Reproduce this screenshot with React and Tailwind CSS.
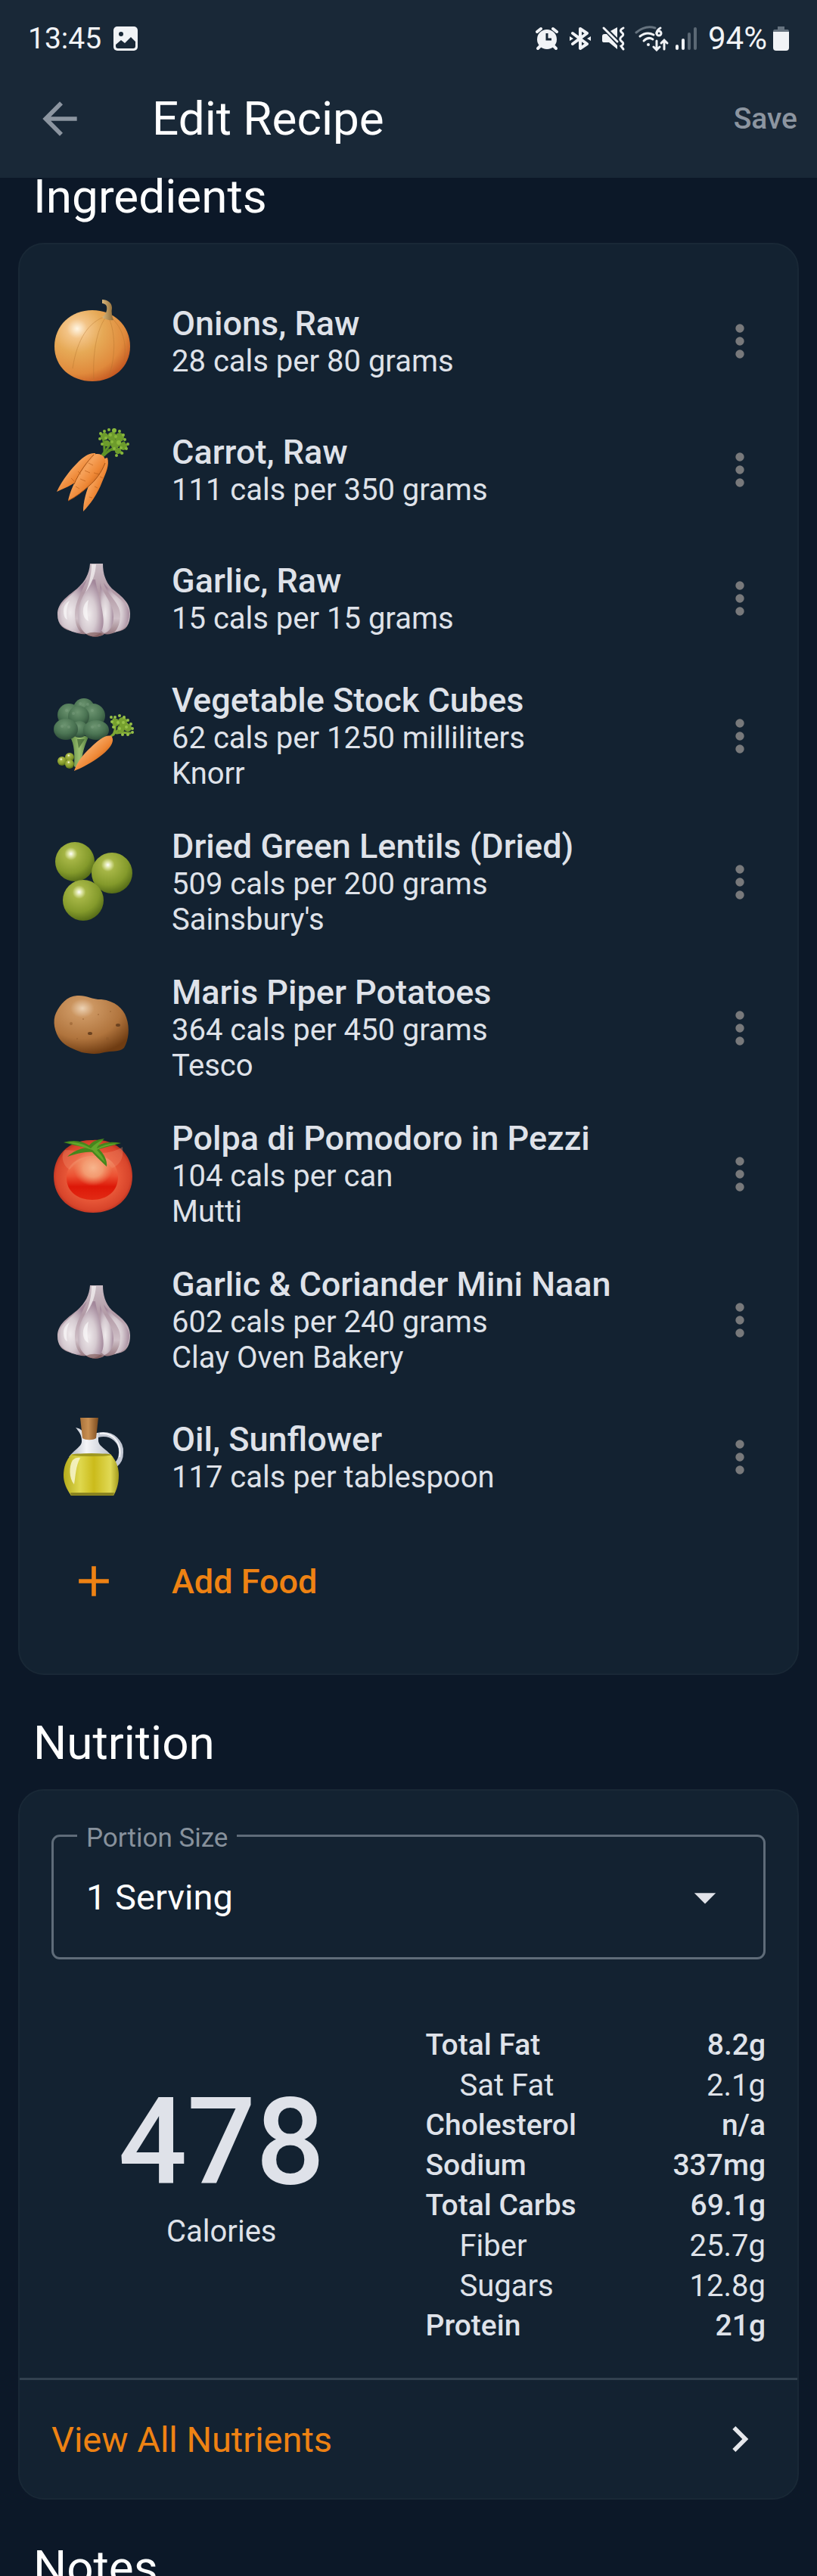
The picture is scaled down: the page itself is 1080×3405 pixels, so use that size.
import React from 'react';

const ingredients = [
  { name: 'Onions, Raw', detail: '28 cals per 80 grams', icon: OnionIcon },
  { name: 'Carrot, Raw', detail: '111 cals per 350 grams', icon: CarrotIcon },
  { name: 'Garlic, Raw', detail: '15 cals per 15 grams', icon: GarlicIcon },
  { name: 'Vegetable Stock Cubes', detail: '62 cals per 1250 milliliters', brand: 'Knorr', icon: VegetablesIcon },
  { name: 'Dried Green Lentils (Dried)', detail: '509 cals per 200 grams', brand: "Sainsbury's", icon: LentilsIcon },
  { name: 'Maris Piper Potatoes', detail: '364 cals per 450 grams', brand: 'Tesco', icon: PotatoIcon },
  { name: 'Polpa di Pomodoro in Pezzi', detail: '104 cals per can', brand: 'Mutti', icon: TomatoIcon },
  { name: 'Garlic & Coriander Mini Naan', detail: '602 cals per 240 grams', brand: 'Clay Oven Bakery', icon: GarlicIcon },
  { name: 'Oil, Sunflower', detail: '117 cals per tablespoon', icon: OilIcon },
];

const nutrients = [
  { label: 'Total Fat', value: '8.2g' },
  { label: 'Sat Fat', value: '2.1g', sub: true },
  { label: 'Cholesterol', value: 'n/a' },
  { label: 'Sodium', value: '337mg' },
  { label: 'Total Carbs', value: '69.1g' },
  { label: 'Fiber', value: '25.7g', sub: true },
  { label: 'Sugars', value: '12.8g', sub: true },
  { label: 'Protein', value: '21g' },
];

// Shared gradients, referenced by id from the food icons
function IconGradients() {
  return (
    <svg width="0" height="0" className="absolute" aria-hidden="true">
      <defs>
        <radialGradient id="onionBody" cx="0.3" cy="0.26" r="0.85">
          <stop offset="0" stopColor="#fff6e4" />
          <stop offset="0.16" stopColor="#f3c487" />
          <stop offset="0.4" stopColor="#e6a956" />
          <stop offset="0.75" stopColor="#e08a3c" />
          <stop offset="1" stopColor="#c04f1c" />
        </radialGradient>
        <linearGradient id="onionStem" x1="0" y1="0" x2="1" y2="0">
          <stop offset="0" stopColor="#d9b77c" />
          <stop offset="1" stopColor="#8f6a35" />
        </linearGradient>
        <linearGradient id="carrotBody" x1="0.2" y1="0.1" x2="0.8" y2="0.7">
          <stop offset="0" stopColor="#d9742a" />
          <stop offset="0.4" stopColor="#f6a25a" />
          <stop offset="0.7" stopColor="#ee8735" />
          <stop offset="1" stopColor="#c05e16" />
        </linearGradient>
        <linearGradient id="garlicBody" x1="0" y1="0" x2="0" y2="1">
          <stop offset="0" stopColor="#c9bcc4" />
          <stop offset="0.4" stopColor="#b29aa6" />
          <stop offset="0.75" stopColor="#cfc0c7" />
          <stop offset="1" stopColor="#8d6d75" />
        </linearGradient>
        <radialGradient id="garlicClove" cx="0.42" cy="0.62" r="0.6">
          <stop offset="0" stopColor="#efeaec" />
          <stop offset="0.5" stopColor="#d6cbd1" />
          <stop offset="1" stopColor="#a3889b" />
        </radialGradient>
        <radialGradient id="broccoliHead" cx="0.45" cy="0.3" r="0.75">
          <stop offset="0" stopColor="#6c9470" />
          <stop offset="0.55" stopColor="#4b7453" />
          <stop offset="1" stopColor="#294734" />
        </radialGradient>
        <linearGradient id="broccoliStalk" x1="0" y1="0" x2="1" y2="0">
          <stop offset="0" stopColor="#5f8a44" />
          <stop offset="0.5" stopColor="#9cc070" />
          <stop offset="1" stopColor="#4f7a3c" />
        </linearGradient>
        <radialGradient id="pea" cx="0.4" cy="0.3" r="0.75">
          <stop offset="0" stopColor="#ffffff" />
          <stop offset="0.1" stopColor="#dbe3a0" />
          <stop offset="0.22" stopColor="#a5b545" />
          <stop offset="0.65" stopColor="#849a2b" />
          <stop offset="1" stopColor="#4d6414" />
        </radialGradient>
        <radialGradient id="potatoBody" cx="0.38" cy="0.22" r="0.8">
          <stop offset="0" stopColor="#ecd2b4" />
          <stop offset="0.2" stopColor="#cb9560" />
          <stop offset="0.65" stopColor="#b0743d" />
          <stop offset="1" stopColor="#6f3c12" />
        </radialGradient>
        <radialGradient id="tomatoBody" cx="0.5" cy="0.5" r="0.55">
          <stop offset="0" stopColor="#f0613a" />
          <stop offset="0.55" stopColor="#ea5a3a" />
          <stop offset="0.85" stopColor="#d8452b" />
          <stop offset="1" stopColor="#a3261a" />
        </radialGradient>
        <linearGradient id="tomatoGlow" x1="0" y1="0" x2="0" y2="1">
          <stop offset="0" stopColor="#f09066" />
          <stop offset="0.45" stopColor="#ec5233" />
          <stop offset="0.7" stopColor="#dd1808" />
          <stop offset="1" stopColor="#e22a14" />
        </linearGradient>
        <radialGradient id="tomatoShine" cx="0.5" cy="0.45" r="0.5">
          <stop offset="0" stopColor="#f7b48c" />
          <stop offset="0.5" stopColor="#f39a70" />
          <stop offset="1" stopColor="#f08a60" stopOpacity="0" />
        </radialGradient>
        <linearGradient id="oilBody" x1="0" y1="0" x2="1" y2="0">
          <stop offset="0" stopColor="#b5ac1c" />
          <stop offset="0.3" stopColor="#dfd84e" />
          <stop offset="0.55" stopColor="#cbbb1b" />
          <stop offset="0.85" stopColor="#e0d955" />
          <stop offset="1" stopColor="#a39b1c" />
        </linearGradient>
        <linearGradient id="glass" x1="0" y1="0" x2="1" y2="0">
          <stop offset="0" stopColor="#aeb4c0" />
          <stop offset="0.4" stopColor="#f4f5f8" />
          <stop offset="1" stopColor="#b9bfca" />
        </linearGradient>
        <linearGradient id="cork" x1="0" y1="0" x2="1" y2="0">
          <stop offset="0" stopColor="#a8713a" />
          <stop offset="0.45" stopColor="#c99053" />
          <stop offset="1" stopColor="#7c4b1f" />
        </linearGradient>
      </defs>
    </svg>
  );
}

function FoodSvg({ children }) {
  return (
    <svg viewBox="2 0 112 112" className="size-28 shrink-0" aria-hidden="true">
      {children}
    </svg>
  );
}

function OnionIcon() {
  return (
    <FoodSvg>
      <path d="M56 15C84 15 106 35 106 63C106 90 84 109 56 109C28 109 6 90 6 63C6 35 28 15 56 15Z" fill="url(#onionBody)" />
      <g fill="none" stroke="#b3722c" strokeWidth="1" opacity="0.4">
        <path d="M74 23C52 30 36 52 30 92" />
        <path d="M75 23C64 36 56 66 58 106" />
        <path d="M77 23C86 42 88 72 78 103" />
        <path d="M79 23C97 38 102 60 98 82" />
      </g>
      <path d="M69 1C76 1 82 5 82 12C81 18 82 23 84 28C79 29 72 27 69 24C74 21 76 15 75 10C74 7 71 6 69 6Z" fill="url(#onionStem)" />
    </FoodSvg>
  );
}

function CarrotIcon() {
  return (
    <FoodSvg>
      <g fill="none" stroke="#5f9327" strokeWidth="3" strokeLinecap="round">
        <path d="M68 38C74 30 80 24 84 10" />
        <path d="M70 38C78 30 88 24 98 20" />
        <path d="M72 36C72 24 72 16 68 10" />
        <path d="M78 30C88 28 94 32 96 34" />
      </g>
      <g fill="#6d9c2c">
        <circle cx="72" cy="12" r="5" />
        <circle cx="82" cy="12" r="6" />
        <circle cx="92" cy="13" r="6" />
        <circle cx="86" cy="22" r="6" />
        <circle cx="97" cy="25" r="5" />
        <circle cx="75" cy="21" r="4" />
        <circle cx="90" cy="31" r="4" />
      </g>
      <g fill="#88b83c">
        <circle cx="67" cy="8" r="2" />
        <circle cx="72" cy="5" r="2" />
        <circle cx="78" cy="3" r="2" />
        <circle cx="85" cy="4" r="3" />
        <circle cx="92" cy="5" r="2" />
        <circle cx="97" cy="10" r="2" />
        <circle cx="99" cy="16" r="2" />
        <circle cx="103" cy="22" r="2" />
        <circle cx="101" cy="28" r="2" />
        <circle cx="95" cy="34" r="2" />
        <circle cx="88" cy="37" r="2" />
        <circle cx="66" cy="15" r="2" />
        <circle cx="69" cy="22" r="2" />
        <circle cx="74" cy="14" r="2" />
        <circle cx="80" cy="10" r="2" />
        <circle cx="87" cy="12" r="2" />
        <circle cx="82" cy="19" r="2" />
        <circle cx="91" cy="20" r="3" />
        <circle cx="85" cy="28" r="2" />
        <circle cx="94" cy="27" r="2" />
      </g>
      <path d="M60 34C52 33 44 39 38 45C28 55 17 68 9 85C22 79 36 74 48 60C56 50 62 42 60 34Z" fill="url(#carrotBody)" />
      <path d="M76 40C79 50 74 60 69 72C63 88 53 102 44 111C44 98 48 84 54 70C59 58 66 42 76 40Z" fill="url(#carrotBody)" />
      <path d="M61 35C70 34 76 42 72 49C68 60 60 70 52 77C43 85 34 92 24 97C26 86 33 70 41 58C47 48 53 37 61 35Z" fill="url(#carrotBody)" />
      <path d="M73 47C68 60 60 70 52 77C43 85 34 92 24 97" fill="none" stroke="#a34f12" strokeWidth="1" />
      <path d="M58 36C50 44 38 60 32 75" fill="none" stroke="#a34f12" strokeWidth="1" />
      <path d="M51 47l6 3M46 57l7 3M40 68l7 3M34 78l5 3M58 60l7 2M37 58l4 4M28 67l4 4M66 65l4 2M59 78l4 2M52 92l4 1" stroke="#b65b16" strokeWidth="1" opacity="0.6" />
    </FoodSvg>
  );
}

function GarlicIcon() {
  return (
    <FoodSvg>
      <path d="M53 10H70C70 22 73 34 82 43C96 54 106 62 106 76C106 90 101 99 88 100C82 103 76 104 72 103C66 108 54 108 48 103C42 104 36 102 32 100C18 98 10 91 10 77C10 62 22 54 36 43C47 33 52 23 53 10Z" fill="url(#garlicBody)" />
      <path d="M49 31C43 46 33 60 33 77C33 88 36 96 41 101C34 103 28 99 24 97C14 93 11 86 11 77C11 62 30 52 49 31Z" fill="url(#garlicClove)" />
      <path d="M71 35C74 50 92 60 93 77C93 88 90 96 85 101C99 98 105 89 105 76C105 61 84 54 71 35Z" fill="url(#garlicClove)" />
      <path d="M66 33C66 46 84 60 84 80C84 92 79 100 72 102C66 100 64 90 66 78C69 62 66 46 66 33Z" fill="url(#garlicClove)" />
      <path d="M56 31C48 46 37 60 37 78C37 92 44 105 58 106C70 103 72 92 70 78C68 60 62 46 60 31Z" fill="url(#garlicClove)" />
      <path d="M55 11H61C60 24 56 36 47 48C52 36 55 24 55 11Z" fill="#f1edef" opacity="0.8" />
      <path d="M18 72C18 66 22 61 26 59C22 66 21 76 23 84C19 82 18 78 18 72Z" fill="#fff" opacity="0.6" />
      <path d="M44 70C45 64 48 60 51 58C49 66 49 78 51 86C46 84 43 78 44 70Z" fill="#fff" opacity="0.6" />
      <path d="M48 103C54 100 64 100 70 103C66 108 54 108 48 103Z" fill="#7c5450" opacity="0.6" />
    </FoodSvg>
  );
}

function VegetablesIcon() {
  return (
    <FoodSvg>
      <path d="M27 58C32 66 33 80 32 96C36 99 40 96 42 92C42 80 46 68 51 57L38 54Z" fill="url(#broccoliStalk)" />
      <path d="M36 60L38 72L46 60Z" fill="#3d6232" opacity="0.7" />
      <g fill="url(#broccoliHead)">
        <circle cx="45" cy="20" r="14" />
        <circle cx="25" cy="28" r="15" />
        <circle cx="57" cy="29" r="16" />
        <circle cx="38" cy="30" r="14" />
        <circle cx="39" cy="47" r="11" />
        <ellipse cx="21" cy="47" rx="16" ry="14" />
        <ellipse cx="61" cy="48" rx="17" ry="13" />
      </g>
      <g fill="#86a889" opacity="0.35">
        <circle cx="40" cy="13" r="2" />
        <circle cx="50" cy="14" r="2" />
        <circle cx="22" cy="22" r="2" />
        <circle cx="31" cy="26" r="2" />
        <circle cx="56" cy="22" r="2" />
        <circle cx="16" cy="43" r="2" />
        <circle cx="25" cy="44" r="2" />
        <circle cx="56" cy="44" r="2" />
        <circle cx="65" cy="42" r="2" />
      </g>
      <g fill="none" stroke="#7da633" strokeWidth="3" strokeLinecap="round">
        <path d="M80 57C88 50 94 44 102 40" />
        <path d="M84 54C88 46 86 40 84 34" />
        <path d="M88 52C96 50 102 52 106 52" />
      </g>
      <g fill="#76a02f">
        <circle cx="87" cy="38" r="5" />
        <circle cx="96" cy="37" r="6" />
        <circle cx="103" cy="45" r="5" />
        <circle cx="94" cy="46" r="5" />
      </g>
      <g fill="#97c148">
        <circle cx="81" cy="31" r="2" />
        <circle cx="86" cy="31" r="2" />
        <circle cx="92" cy="29" r="2" />
        <circle cx="98" cy="31" r="2" />
        <circle cx="103" cy="35" r="2" />
        <circle cx="107" cy="40" r="2" />
        <circle cx="109" cy="46" r="2" />
        <circle cx="109" cy="51" r="2" />
        <circle cx="103" cy="54" r="2" />
        <circle cx="96" cy="54" r="2" />
        <circle cx="82" cy="37" r="2" />
        <circle cx="84" cy="44" r="2" />
        <circle cx="90" cy="38" r="2" />
        <circle cx="97" cy="38" r="2" />
        <circle cx="101" cy="44" r="2" />
        <circle cx="92" cy="46" r="2" />
      </g>
      <path d="M82 57C86 64 78 74 66 83C54 92 42 98 32 102C36 90 44 80 54 71C64 61 76 52 82 57Z" fill="url(#carrotBody)" />
      <circle cx="16" cy="89" r="6" fill="url(#pea)" />
      <circle cx="26" cy="84" r="6" fill="url(#pea)" />
      <circle cx="26" cy="93" r="6" fill="url(#pea)" />
    </FoodSvg>
  );
}

function LentilsIcon() {
  return (
    <FoodSvg>
      <circle cx="33" cy="29" r="26" fill="url(#pea)" />
      <circle cx="82" cy="44" r="27" fill="url(#pea)" />
      <circle cx="44" cy="80" r="27" fill="url(#pea)" />
    </FoodSvg>
  );
}

function PotatoIcon() {
  return (
    <FoodSvg>
      <path d="M36 13C48 12 54 18 68 18C86 20 97 30 101 42C106 56 104 72 98 82C92 88 80 86 72 88C62 91 52 90 42 88C32 84 20 80 14 72C6 62 3 46 8 36C14 24 22 14 36 13Z" fill="url(#potatoBody)" />
      <g fill="#6b4220">
        <ellipse cx="53" cy="63" rx="3" ry="2" />
        <ellipse cx="90" cy="52" rx="3" ry="2" />
      </g>
      <g fill="#8f5a2b" opacity="0.5">
        <circle cx="28" cy="50" r="2" />
        <circle cx="64" cy="38" r="1" />
        <circle cx="44" cy="44" r="1" />
        <circle cx="76" cy="70" r="2" />
        <circle cx="36" cy="70" r="1" />
        <circle cx="80" cy="34" r="1" />
      </g>
    </FoodSvg>
  );
}

function TomatoIcon() {
  return (
    <FoodSvg>
      <path d="M57 11C88 9 109 30 109 59C109 88 86 107 57 107C28 107 5 88 5 59C5 30 26 10 57 11Z" fill="url(#tomatoBody)" />
      <path d="M56 32C76 30 90 42 90 60C90 78 76 90 56 90C37 90 22 79 22 61C22 44 36 33 56 32Z" fill="url(#tomatoGlow)" />
      <ellipse cx="57" cy="50" rx="26" ry="24" fill="url(#tomatoShine)" />
      <path d="M54 26C66 30 84 28 96 20C98 36 92 44 82 48C74 38 64 34 56 34C46 34 34 40 26 50C16 44 14 30 20 24Z" fill="#f08f6c" opacity="0.35" />
      <path d="M18 14C32 10 42 12 52 18C56 12 64 10 72 9C68 13 65 16 64 18C74 13 84 13 94 15C84 18 74 20 65 23C72 30 76 38 75 46C69 40 62 34 56 27C46 26 34 29 23 33C30 26 40 22 48 21C38 19 28 17 18 14Z" fill="#45861c" />
      <path d="M24 14C36 13 46 17 54 22C58 17 64 13 70 11C65 17 62 20 62 22C72 17 80 15 88 16C78 18 70 20 62 24C67 29 71 35 73 41C67 35 61 29 56 24Z" fill="#64a52c" />
    </FoodSvg>
  );
}

function OilIcon() {
  return (
    <FoodSvg>
      <path d="M63 27C84 22 95 38 94 50C94 58 91 63 87 66" fill="none" stroke="#c3c8d3" strokeWidth="6" />
      <path d="M66 25C86 23 95 40 92 56" fill="none" stroke="#f5f6f9" strokeWidth="2" />
      <path d="M34 17C39 18 43 20 43 24H64V34C64 42 76 46 83 56H25C32 46 43 42 42 34C42 26 38 22 34 17Z" fill="url(#glass)" />
      <path d="M29 52H80C89 62 91 72 91 80C91 91 88 100 84 107H28C22 98 18 90 18 80C18 70 21 60 29 52Z" fill="url(#oilBody)" />
      <ellipse cx="55" cy="53" rx="26" ry="2" fill="#9f9822" />
      <path d="M30 60C33 57 37 56 40 57C34 68 34 80 32 92C25 84 25 68 30 60Z" fill="#f8f6cf" opacity="0.85" />
      <path d="M27 103H85L84 107H28Z" fill="#8b8420" />
      <path d="M40 4H64L61 31C57 34 47 34 43 31Z" fill="url(#cork)" />
    </FoodSvg>
  );
}

function StatusIcons() {
  return (
    <svg viewBox="0 0 216 34" className="h-[34px] w-[216px]" aria-hidden="true">
      {/* alarm */}
      <g transform="translate(0 1)">
        <circle cx="15" cy="17" r="13" fill="#f1f3f6" />
        <path d="M2 7L7 3M28 7L23 3" stroke="#f1f3f6" strokeWidth="4" strokeLinecap="round" />
        <path d="M6 26L3 29M24 26L27 29" stroke="#f1f3f6" strokeWidth="4" strokeLinecap="round" />
        <path d="M15 9V17H21" fill="none" stroke="#192837" strokeWidth="3" />
      </g>
      {/* bluetooth */}
      <path d="M49 10L68 24L59 30V4L68 10L49 24" fill="none" stroke="#f1f3f6" strokeWidth="4" strokeLinejoin="round" strokeLinecap="round" />
      <path d="M45 14L50 17L45 20ZM73 14L68 17L73 20Z" fill="#f1f3f6" />
      {/* sound off, vibrate */}
      <path d="M88 14Q88 11 91 11H94L108 26V31L97 22H91Q88 22 88 20Z" fill="#f1f3f6" />
      <path d="M99 7L108 2V16Z" fill="#f1f3f6" />
      <path d="M90 3L108 21" stroke="#f1f3f6" strokeWidth="3" strokeLinecap="round" />
      <path d="M116 3Q110 6 114 9Q118 12 113 15Q110 18 114 21Q118 24 113 27L116 31" fill="none" stroke="#f1f3f6" strokeWidth="3" strokeLinecap="round" />
      {/* wifi 6 with data arrows */}
      <path d="M133 9Q145 -1 158 3" fill="none" stroke="#66737f" strokeWidth="3" strokeLinecap="round" />
      <g fill="none" stroke="#f1f3f6" strokeWidth="3" strokeLinecap="round">
        <path d="M138 14Q147 7 156 12" />
        <path d="M143 20Q149 14 155 18" />
        <path d="M165 3Q160 6 160 10" />
        <circle cx="163" cy="10" r="3" />
        <path d="M160 20V31M156 28L160 32L164 28" />
        <path d="M170 31V20M166 23L170 19L174 23" />
      </g>
      <circle cx="149" cy="25" r="2" fill="#f1f3f6" />
      {/* signal strength */}
      <g strokeWidth="4" strokeLinecap="round">
        <path d="M187 27V30M195 19V30" stroke="#f1f3f6" />
        <path d="M203 11V30M211 4V30" stroke="#5b6874" />
      </g>
    </svg>
  );
}

function StatusBar() {
  return (
    <div className="flex h-[77px] items-center justify-between px-[37px] pt-[25px] leading-[50px] text-[#f1f3f6]">
      <div className="flex items-center gap-4">
        <span className="text-[39px]">13:45</span>
        <svg viewBox="0 0 32 32" className="size-8" aria-hidden="true">
          <rect width="32" height="32" rx="5" fill="#f1f3f6" />
          <circle cx="10" cy="10" r="3" fill="#192837" />
          <path d="M3 24L10 18L15 22L23 14L29 20V26Q29 29 26 29H6Q3 29 3 26Z" fill="#192837" />
        </svg>
      </div>
      <div className="flex items-center">
        <StatusIcons />
        <span className="ml-3 text-[42px]">94%</span>
        <svg viewBox="0 0 21 32" className="ml-2 h-8 w-[21px]" aria-hidden="true">
          <path d="M6 0H15V4H19Q21 4 21 7H0Q0 4 2 4H6Z" fill="#66737f" />
          <path d="M0 7H21V28Q21 32 17 32H4Q0 32 0 28Z" fill="#f1f3f6" />
        </svg>
      </div>
    </div>
  );
}

function Header() {
  return (
    <header className="relative z-10 shrink-0 bg-[#192837]">
      <StatusBar />
      <div className="flex h-[158px] items-center pt-0.5 pr-[26px] pl-[45px]">
        <button type="button" aria-label="Back">
          <svg viewBox="0 0 24 24" className="size-[68px]" fill="#8c95a0">
            <path d="M20 11H7.83l5.59-5.59L12 4l-8 8 8 8 1.41-1.41L7.83 13H20v-2z" />
          </svg>
        </button>
        <h1 className="ml-[88px] flex-1 text-[62px] leading-[74px] text-white">Edit Recipe</h1>
        <button type="button" className="text-[39px] leading-[47px] font-medium text-[#8c95a0]">
          Save
        </button>
      </div>
    </header>
  );
}

function SectionTitle({ children }) {
  return <h2 className="pb-9 pl-5 text-[62px] leading-[50px] text-white">{children}</h2>;
}

function Card({ children }) {
  return (
    <div className="rounded-[34px] border-2 border-[#192836] bg-[#132231]">
      {children}
    </div>
  );
}

function IngredientRow({ item }) {
  const Icon = item.icon;

  return (
    <li className={`flex items-center ${item.brand ? 'h-[193px]' : 'h-[170px]'}`}>
      <Icon />
      <div className="ml-[47px] flex-1 text-[40px] leading-[47px]">
        <p className="text-[45px] leading-[53px] font-medium">{item.name}</p>
        <p>{item.detail}</p>
        {item.brand && <p>{item.brand}</p>}
      </div>
      <button type="button" aria-label={`Options for ${item.name}`}>
        <svg viewBox="0 0 24 24" className="size-[68px]" fill="#78797b">
          <circle cx="12" cy="6" r="2" />
          <circle cx="12" cy="12" r="2" />
          <circle cx="12" cy="18" r="2" />
        </svg>
      </button>
    </li>
  );
}

function Ingredients() {
  return (
    <section>
      <SectionTitle>Ingredients</SectionTitle>
      <Card>
        <div className="px-[42px] py-[43px]">
          <ul>
            {ingredients.map((item) => (
              <IngredientRow key={item.name} item={item} />
            ))}
          </ul>
          <button type="button" className="flex h-[158px] w-full items-center text-[#ee8213]">
            <span className="flex w-28 justify-center">
              <svg viewBox="0 0 24 24" className="size-[68px]" fill="currentColor" aria-hidden="true">
                <path d="M19 13h-6v6h-2v-6H5v-2h6V5h2v6h6v2z" />
              </svg>
            </span>
            <span className="ml-[47px] text-[45px] leading-[53px] font-medium">Add Food</span>
          </button>
        </div>
      </Card>
    </section>
  );
}

function PortionSelect() {
  return (
    <fieldset className="rounded-[11px] border-[3px] border-[#5f6c79] px-[31px] pb-[18px]">
      <legend className="px-3 pt-1.5 text-[35px] leading-[35px] text-[#87919c]">
        <label htmlFor="portion">Portion Size</label>
      </legend>
      <div className="relative">
        <select
          id="portion"
          defaultValue="1 Serving"
          className="h-[122px] w-full appearance-none bg-transparent pl-3 text-[47px] text-white"
        >
          <option>1 Serving</option>
        </select>
        <svg
          viewBox="0 0 24 24"
          className="pointer-events-none absolute inset-y-0 right-3 my-auto size-[68px]"
          fill="#e1e3e9"
          aria-hidden="true"
        >
          <path d="M7 10l5 5 5-5z" />
        </svg>
      </div>
    </fieldset>
  );
}

function Nutrition() {
  return (
    <section className="mt-[65px]">
      <SectionTitle>Nutrition</SectionTitle>
      <Card>
        <div className="px-[42px] pt-[39px] pb-[42px]">
          <PortionSelect />
          <div className="mt-[87px] grid grid-cols-2 gap-[45px]">
            <div className="pt-[61px] text-center">
              <p className="text-[160px] leading-[188px] font-medium">478</p>
              <p className="text-[40px] leading-[47px]">Calories</p>
            </div>
            <table className="w-full text-[39px] leading-[53px]">
              <tbody>
                {nutrients.map((row) => (
                  <tr key={row.label} className={row.sub ? 'text-[40px] font-normal' : 'font-medium'}>
                    <td className={row.sub ? 'pl-[45px]' : ''}>{row.label}</td>
                    <td className="text-right">{row.value}</td>
                  </tr>
                ))}
              </tbody>
            </table>
          </div>
        </div>
        <a href="#nutrients" className="flex h-[159px] items-center justify-between border-t-[3px] border-[#32414f] px-[42px]">
          <span className="text-[47px] leading-[53px] text-[#ee8213]">View All Nutrients</span>
          <svg viewBox="0 0 24 24" className="size-[68px]" fill="#e6e8ec" aria-hidden="true">
            <path d="M10 6L8.59 7.41 13.17 12l-4.58 4.59L10 18l6-6z" />
          </svg>
        </a>
      </Card>
    </section>
  );
}

export default function App() {
  return (
    <div className="flex h-screen flex-col overflow-hidden bg-[#0c1828] font-[Roboto,sans-serif] text-[#dfe2e9]">
      <IconGradients />
      <Header />
      <main className="min-h-0 flex-1 overflow-hidden px-6">
        <Ingredients />
        <Nutrition />
        <section className="mt-[65px]">
          <SectionTitle>Notes</SectionTitle>
        </section>
      </main>
    </div>
  );
}
